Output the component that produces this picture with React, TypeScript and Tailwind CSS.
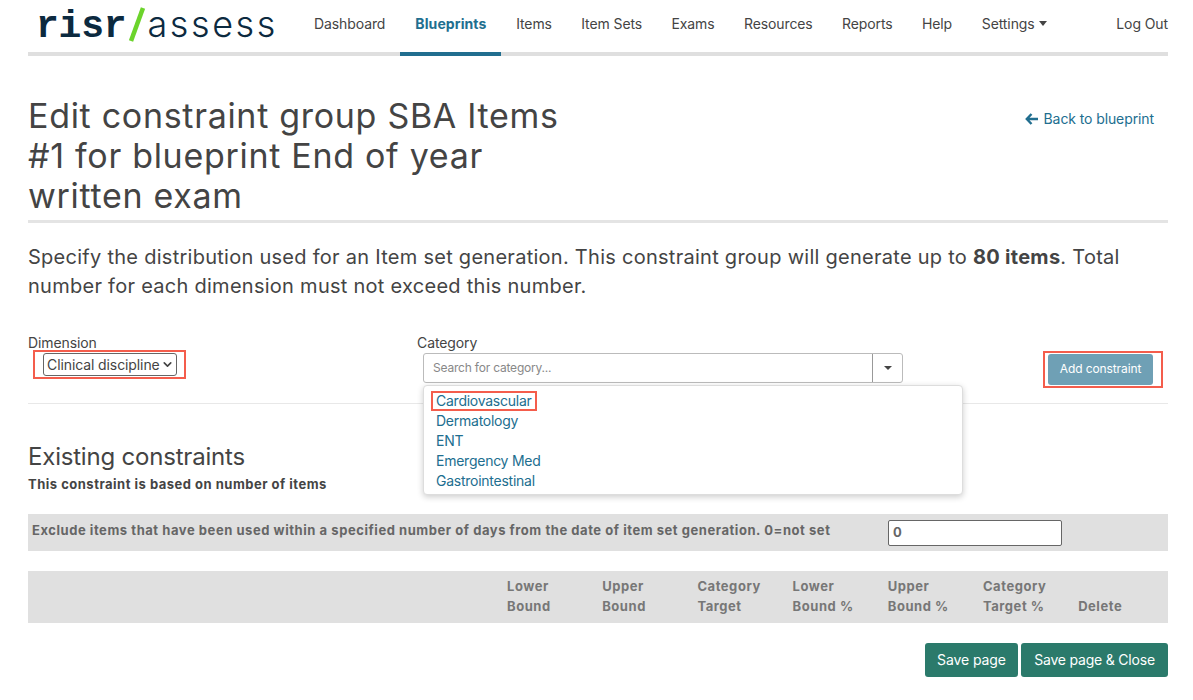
import { FC } from "react";
import { ChevronDown } from "lucide-react";

const navItems = ["Dashboard", "Blueprints", "Items", "Item Sets", "Exams", "Resources", "Reports", "Help"];
const categories = ["Cardiovascular", "Dermatology", "ENT", "Emergency Med", "Gastrointestinal"];
const columns = [
  ["Lower", "Bound"],
  ["Upper", "Bound"],
  ["Category", "Target"],
  ["Lower", "Bound %"],
  ["Upper", "Bound %"],
  ["Category", "Target %"],
  ["", "Delete"],
];

const Logo: FC = () => (
  <div className="flex w-[271px] items-center pb-[2px] pl-[8px]">
    <span className="mt-[3px] font-['Liberation_Mono',monospace] text-[38px] font-bold leading-none tracking-[-0.2px] text-[#0c2a3f]">
      risr
    </span>
    <svg width="21" height="36" viewBox="0 0 21 36" className="shrink-0">
      <path d="M17 1 L5 34" stroke="#6cd42c" strokeWidth="4.5" />
    </svg>
    <span className="mb-[2px] font-['Inter',sans-serif] text-[36px] font-light leading-none tracking-[2.6px] text-[#0c2a3f]">
      assess
    </span>
  </div>
);

const Nav: FC = () => (
  <nav className="flex h-14 items-stretch border-b-4 border-[#dfdfdf]">
    <Logo />
    {navItems.map((item) => (
      <a
        key={item}
        className={
          item === "Blueprints"
            ? "-mb-1 flex items-center border-b-4 border-[#216e8f] px-[15px] pb-[6px] font-bold tracking-[0.1px] text-[#216e8f]"
            : item === "Dashboard"
              ? "flex items-center px-[15px] pb-[6px] text-[#444]"
              : "flex items-center px-[14.7px] pb-[6px] text-[#444]"
        }
      >
        {item}
      </a>
    ))}
    <a className="flex items-center gap-1 px-[15px] pb-[6px] text-[#444]">
      Settings
      <span className="mt-[1px] h-0 w-0 border-x-[4px] border-t-[5px] border-x-transparent border-t-[#444]" />
    </a>
    <a className="ml-auto flex items-center pb-[6px] text-[#444]">Log Out</a>
  </nav>
);

export default function App() {
  return (
    <div className="h-[700px] overflow-hidden bg-white pl-[28px] pr-[25px] font-['Inter',sans-serif] text-[14px] tracking-[-0.1px] text-[#444]">
      <Nav />

      <div className="mt-[40px] flex items-start justify-between border-b-[3px] border-[#e4e4e4] pb-[4px]">
        <h1 className="w-[540px] text-[34px] font-normal leading-[40px] tracking-[0.7px] text-[#444]">
          Edit constraint group SBA Items #1 for blueprint End of year written exam
        </h1>
        <a className="mr-[14px] mt-[12px] flex items-center gap-[6px] text-[#216e8f]">
          <svg width="13" height="12" viewBox="0 0 13 12" fill="none" stroke="#216e8f" strokeWidth="2.4">
            <path d="M6.5 1 L1.8 6 L6.5 11 M2 6 H13" />
          </svg>
          Back to blueprint
        </a>
      </div>

      <p className="mt-[20px] w-[1120px] text-[20px] leading-[29px] tracking-[0.27px] text-[#444]">
        Specify the distribution used for an Item set generation. This constraint group will generate up to{" "}
        <b>80 items</b>. Total number for each dimension must not exceed this number.
      </p>

      <div className="relative mt-[33px] flex h-[70px] items-start border-b border-[#e8e8e8]">
        <div className="w-[389px]">
          <div className="h-[17px] leading-[17px]">Dimension</div>
          <div className="ml-[5px] mt-[-1px] w-fit border-2 border-[#f45d4c] py-[1px] pl-[8px] pr-[7px]">
            <div className="flex h-[23px] w-[134px] items-center justify-between rounded-[3px] border border-[#666] pl-[3px] pr-[2px]">
              Clinical discipline
              <ChevronDown size={13} strokeWidth={3} />
            </div>
          </div>
        </div>

        <div className="w-[487px]">
          <div className="h-[17px] leading-[17px]">Category</div>
          <div className="ml-[6px] mt-[2px] flex h-[30px] w-[480px] rounded-[3px] border border-[#bbb]">
            <div className="flex flex-1 items-center border-r border-[#999] pl-[9px] text-[12px] tracking-[-0.2px] text-[#888]">
              Search for category...
            </div>
            <div className="flex w-[29px] items-center justify-center">
              <span className="h-0 w-0 border-x-[4px] border-t-[4px] border-x-transparent border-t-[#444]" />
            </div>
          </div>
        </div>

        <div className="ml-auto mr-[5px] mt-[17px] border-2 border-[#f45d4c] py-[1px] pl-[3px] pr-[8px]">
          <button className="block h-[31px] w-[105px] rounded-[3px] bg-[#6fa0b5] pb-[2px] text-[12px] text-white">Add constraint</button>
        </div>

        <div className="absolute left-[395px] top-[51px] z-10 h-[110px] w-[540px] rounded-[4px] border border-[#ddd] bg-white pl-[7px] pt-[4px] tracking-[-0.25px] shadow-[0_2px_6px_rgba(0,0,0,0.2)]">
          {categories.map((c, i) => (
            <div key={c} className="h-[20px]">
              <span
                className={
                  i === 0
                    ? "inline-block h-[20px] border-2 border-[#f45d4c] px-[3px] leading-[15px] text-[#216e8f]"
                    : "ml-[5px] leading-[20px] text-[#216e8f]"
                }
              >
                {c}
              </span>
            </div>
          ))}
        </div>
      </div>

      <h2 className="mt-[38px] text-[24px] font-normal leading-[30px] tracking-[-0.2px]">Existing constraints</h2>
      <p className="mt-[2px] text-[13px] font-bold leading-[20px] tracking-[0.5px]">This constraint is based on number of items</p>

      <div className="mt-[20px] flex h-[37px] items-center bg-[#e0e0e0] pl-[4px]">
        <div className="w-[856px] pb-[4px] text-[13px] font-bold tracking-[0.55px] text-[#666]">
          Exclude items that have been used within a specified number of days from the date of item set generation. 0=not set
        </div>
        <div className="flex h-[26px] w-[174px] items-center rounded-[2px] border border-[#666] bg-white pl-[4px] text-[13px] font-bold text-[#666]">
          0
        </div>
      </div>

      <div className="mt-[20px] flex h-[52px] items-end bg-[#e0e0e0] pb-[7px] pl-[479px] text-[13px] font-bold leading-[20px] tracking-[0.55px] text-[#777]">
        {columns.map(([top, bottom], i) => (
          <div key={i} className="w-[95.2px] shrink-0">
            <div>{top}</div>
            <div>{bottom}</div>
          </div>
        ))}
      </div>

      <div className="mt-[20px] flex justify-end gap-[3px]">
        <button className="h-[34px] w-[93px] rounded-[3px] bg-[#2b7a6b] pb-[1px] text-[14px] text-white">Save page</button>
        <button className="h-[34px] w-[147px] rounded-[3px] bg-[#2b7a6b] pb-[1px] text-[14px] tracking-[-0.2px] text-white">Save page &amp; Close</button>
      </div>
    </div>
  );
}
